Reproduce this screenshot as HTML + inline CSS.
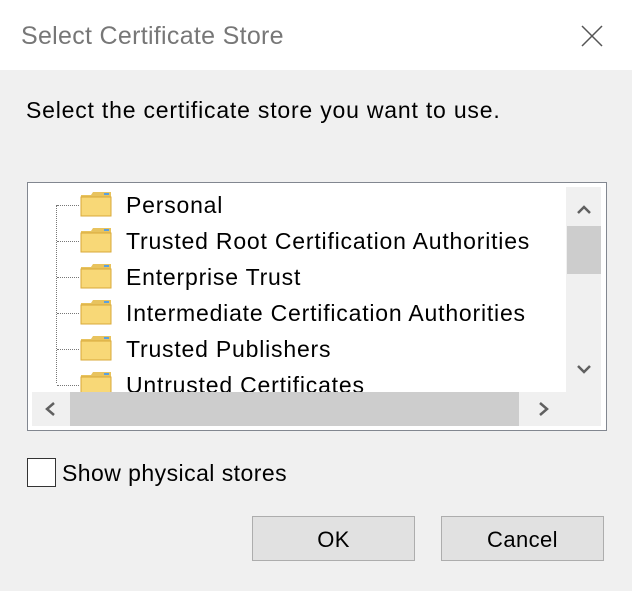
<!DOCTYPE html><html><head><style>
body{margin:0;width:632px;height:591px;overflow:hidden;background:#f0f0f0;font-family:"Liberation Sans",sans-serif;position:relative}
.a{position:absolute}
.title{left:0;top:0;width:632px;height:70px;background:#fff}
.t{white-space:nowrap;color:#000}
.item{position:absolute;left:126px;font-size:23px;letter-spacing:0.8px;color:#000;white-space:nowrap}
.fold{position:absolute;left:80px;width:32px;height:26px}
.btn{position:absolute;height:43px;width:161px;border:1px solid #adadad;background:#e1e1e1;font-size:22px;letter-spacing:0.4px;text-align:center;line-height:45px}
</style></head><body>
<div class="a title"></div>
<div class="a t" style="left:21px;top:22px;font-size:25px;letter-spacing:0.3px;color:#777">Select Certificate Store</div>
<svg class="a" style="left:580px;top:24px" width="24" height="24"><path d="M2 2L22 22M22 2L2 22" stroke="#555" stroke-width="1.5"/></svg>
<div class="a t" style="left:26px;top:97px;font-size:23px;letter-spacing:0.8px">Select the certificate store you want to use.</div>
<div class="a" style="left:27px;top:182px;width:578px;height:247px;border:1px solid #828790;background:#fff"></div>
<div class="a" style="left:56px;top:205px;height:178px;border-left:1px dotted #777"></div>
<div class="a" style="left:566px;top:187px;width:35px;height:205px;background:#f0f0f0"></div>
<div class="a" style="left:567px;top:226px;width:34px;height:48px;background:#cdcdcd"></div>
<div class="a" style="left:32px;top:392px;width:569px;height:34px;background:#f0f0f0"></div>
<div class="a" style="left:70px;top:392px;width:449px;height:34px;background:#cdcdcd"></div>
<svg class="a" style="left:574px;top:200px" width="20" height="180"><path d="M4 13L10 7L16 13" fill="none" stroke="#606060" stroke-width="2.5"/><path d="M4 166L10 172L16 166" fill="none" stroke="#606060" stroke-width="2.5"/></svg>
<svg class="a" style="left:40px;top:400px" width="520" height="20"><path d="M14 3L7 9L14 15" fill="none" stroke="#606060" stroke-width="2.5"/><path d="M500 3L507 9L500 15" fill="none" stroke="#606060" stroke-width="2.5"/></svg>
<div class="a" style="left:28px;top:183px;width:538px;height:209px;overflow:hidden">
<div style="position:absolute;left:-28px;top:-183px;width:632px;height:600px">
<script>
var ys=[205,241,277,313,349,385],n=["Personal","Trusted Root Certification Authorities","Enterprise Trust","Intermediate Certification Authorities","Trusted Publishers","Untrusted Certificates"];
for(var i=0;i<6;i++){document.write('<div class="a" style="left:57px;top:'+ys[i]+'px;width:22px;border-top:1px dotted #777"></div><svg class="fold" style="top:'+(ys[i]-14)+'px" viewBox="0 0 32 26"><path d="M1 4h10l2 -3h18v24H1z" fill="#e8c35e"/><rect x="1" y="6" width="30" height="19" fill="#f8d877" stroke="#d9a93a"/><rect x="24" y="2" width="5" height="2" fill="#5aa0e0"/></svg><div class="item" style="top:'+(ys[i]-13)+'px">'+n[i]+'</div>')}
</script>
</div></div>
<div class="a" style="left:27px;top:458px;width:27px;height:27px;border:1px solid #333;background:#fff"></div>
<div class="a t" style="left:62px;top:460px;font-size:23px;letter-spacing:0.45px">Show physical stores</div>
<div class="btn" style="left:252px;top:516px">OK</div>
<div class="btn" style="left:441px;top:516px">Cancel</div>
</body></html>
